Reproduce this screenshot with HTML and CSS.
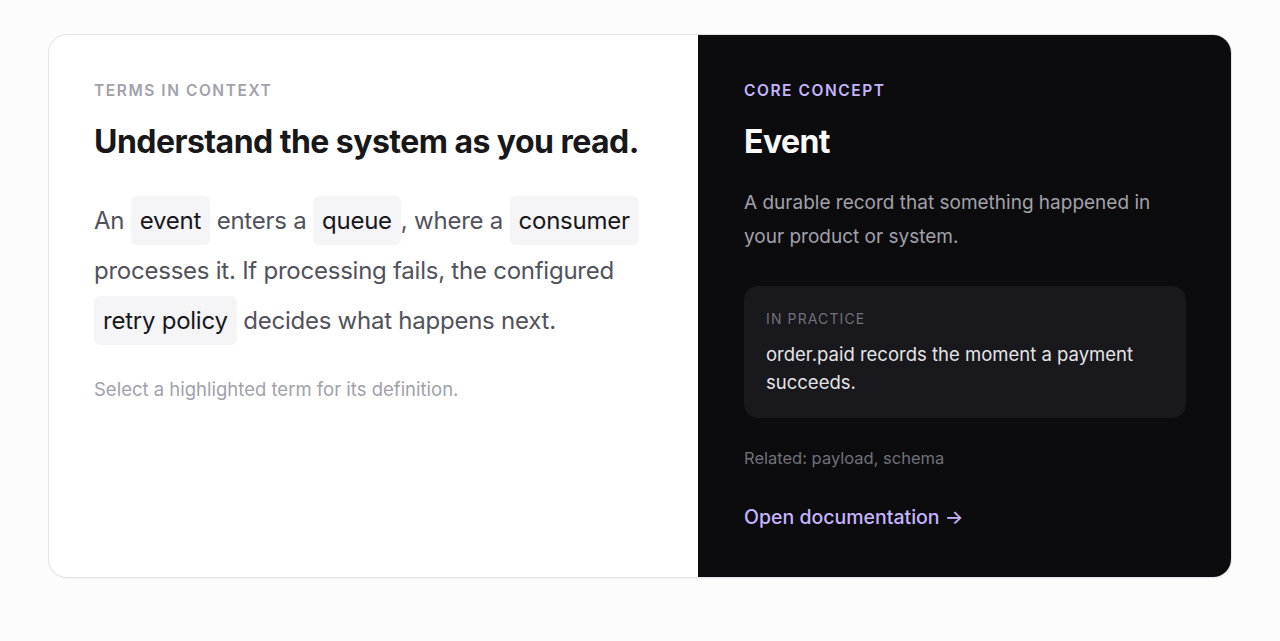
FILE: index.html
```html
<!DOCTYPE html>
<html lang="en">
<head>
<meta charset="utf-8">
<title>Terms in context</title>
<link rel="stylesheet" href="styles.css">
</head>
<body>
<main class="card">
  <section class="reader">
    <p class="eyebrow">Terms in context</p>
    <h1 class="title">Understand the system as you read.</h1>
    <p class="passage">An <span class="term" role="button" tabindex="0">event</span> enters a <span class="term" role="button" tabindex="0">queue</span>, where a <span class="term" role="button" tabindex="0">consumer</span> processes it. If processing fails, the configured <span class="term" role="button" tabindex="0">retry policy</span> decides what happens next.</p>
    <p class="hint">Select a highlighted term for its definition.</p>
  </section>
  <aside class="concept">
    <p class="eyebrow eyebrow-accent">Core concept</p>
    <h2 class="title title-light">Event</h2>
    <p class="definition">A durable record that something happened in your product or system.</p>
    <div class="practice">
      <p class="practice-label">In practice</p>
      <p class="practice-text">order.paid records the moment a payment succeeds.</p>
    </div>
    <p class="related">Related: payload, schema</p>
    <a class="doc-link" href="#">Open documentation →</a>
  </aside>
</main>
</body>
</html>
```
FILE: styles.css
```css
* { box-sizing: border-box; }
html, body { margin: 0; }
body {
  background: #fdfcfd;
  font-family: Inter, "Noto Sans", "Liberation Sans", sans-serif;
  padding: 34px 48px;
}
p, h1, h2 { margin: 0; }
.card {
  display: grid;
  grid-template-columns: 649px 1fr;
  width: 1184px;
  min-height: 544px;
  border: 1px solid #e4e4e7;
  border-radius: 19px;
  overflow: hidden;
  background: #fff;
  box-shadow: 0 1px 2px rgba(24, 24, 27, 0.04);
}
.reader {
  padding: 46px 45px 40px 45px;
}
.eyebrow {
  font-size: 15.5px;
  font-weight: 600;
  letter-spacing: 0.1em;
  text-transform: uppercase;
  color: #a1a1aa;
  line-height: 20px;
}
.eyebrow-accent { color: #c4b5fd; }
.title {
  margin-top: 21px;
  font-size: 32px;
  font-weight: 700;
  letter-spacing: -0.017em;
  line-height: 40px;
  color: #18181b;
}
.title-light { color: #fafafa; }
.passage {
  margin-top: 34px;
  font-size: 24px;
  line-height: 50px;
  color: #52525b;
  letter-spacing: -0.01em;
}
.term {
  color: #18181b;
  background: #f5f4f6;
  border-radius: 6px;
  padding: 10px 9px;
  cursor: pointer;
  -webkit-box-decoration-break: clone;
  box-decoration-break: clone;
}
.hint {
  margin-top: 31px;
  font-size: 18.5px;
  line-height: 24px;
  color: #a1a1aa;
}
.concept {
  background: #0c0b0e;
  padding: 46px 45px 40px 46px;
  display: flex;
  flex-direction: column;
  align-items: flex-start;
}
.definition {
  margin-top: 24px;
  font-size: 19px;
  line-height: 34px;
  color: #a1a1aa;
}
.practice {
  align-self: stretch;
  margin-top: 32px;
  background: #19181c;
  border-radius: 14px;
  padding: 24px 22px 22px 22px;
}
.practice-label {
  font-size: 14px;
  letter-spacing: 0.08em;
  text-transform: uppercase;
  color: #71717a;
  line-height: 18px;
}
.practice-text {
  margin-top: 12px;
  font-size: 18.5px;
  line-height: 28px;
  color: #e4e4e7;
}
.related {
  margin-top: 29px;
  font-size: 16.5px;
  line-height: 22px;
  color: #71717a;
}
.doc-link {
  margin-top: 35px;
  font-size: 19.5px;
  font-weight: 500;
  line-height: 26px;
  color: #c4b5fd;
  text-decoration: none;
}
```
